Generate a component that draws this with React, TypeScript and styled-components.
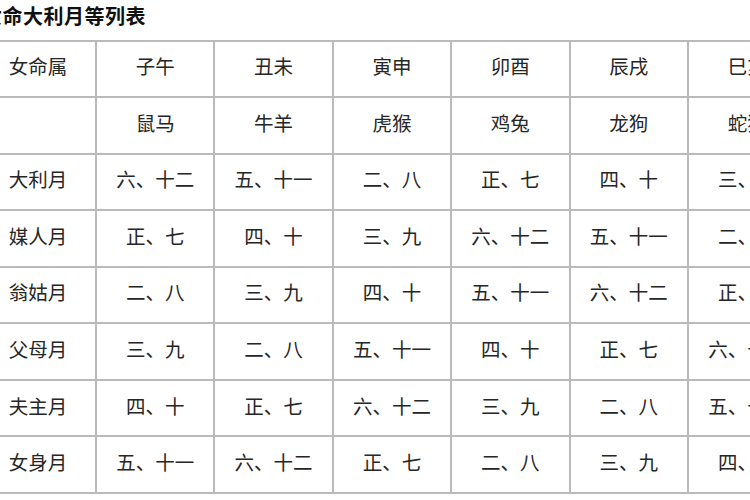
import React from 'react';
import styled, { createGlobalStyle } from 'styled-components';

const GlobalStyle = createGlobalStyle`
  html, body {
    margin: 0;
    padding: 0;
    background: #ffffff;
    overflow: hidden;
  }
  body {
    font-family: "Noto Sans CJK SC", "Noto Sans", sans-serif;
  }
`;

const header = ['女命属', '子午', '丑未', '寅申', '卯酉', '辰戌', '巳亥'];
const animals = ['', '鼠马', '牛羊', '虎猴', '鸡兔', '龙狗', '蛇猪'];

const rows: string[][] = [
  ['大利月', '六、十二', '五、十一', '二、八', '正、七', '四、十', '三、九'],
  ['媒人月', '正、七', '四、十', '三、九', '六、十二', '五、十一', '二、八'],
  ['翁姑月', '二、八', '三、九', '四、十', '五、十一', '六、十二', '正、七'],
  ['父母月', '三、九', '二、八', '五、十一', '四、十', '正、七', '六、十二'],
  ['夫主月', '四、十', '正、七', '六、十二', '三、九', '二、八', '五、十一'],
  ['女身月', '五、十一', '六、十二', '正、七', '二、八', '三、九', '四、十'],
];

// the screenshot is a crop: the table starts a little left of the frame
const Page = styled.div`
  margin-left: -21px;
  width: 840px;
`;

const Title = styled.h2`
  box-sizing: border-box;
  height: 39.5px;
  margin: 0;
  padding: 1px 0 0 3px;
  font-size: 20px;
  line-height: 30px;
  font-weight: 700;
  color: #111;
  letter-spacing: 0.5px;
`;

const Grid = styled.div`
  display: grid;
  grid-template-columns: 114px repeat(6, 116.4px);
  grid-auto-rows: 54.56px;
  gap: 2px;
  padding: 2px;
  width: max-content;
  background: #bababa;
`;

const Cell = styled.div`
  display: flex;
  align-items: center;
  justify-content: center;
  padding-bottom: 6px;
  box-sizing: border-box;
  background: #ffffff;
  font-size: 19.5px;
  color: #262626;
  white-space: nowrap;
`;

export default function App() {
  const all = [header, animals, ...rows];
  return (
    <>
      <GlobalStyle />
      <Page>
        <Title>女命大利月等列表</Title>
        <Grid>
          {all.map((row, r) =>
            row.map((text, c) => <Cell key={`${r}-${c}`}>{text}</Cell>)
          )}
        </Grid>
      </Page>
    </>
  );
}
